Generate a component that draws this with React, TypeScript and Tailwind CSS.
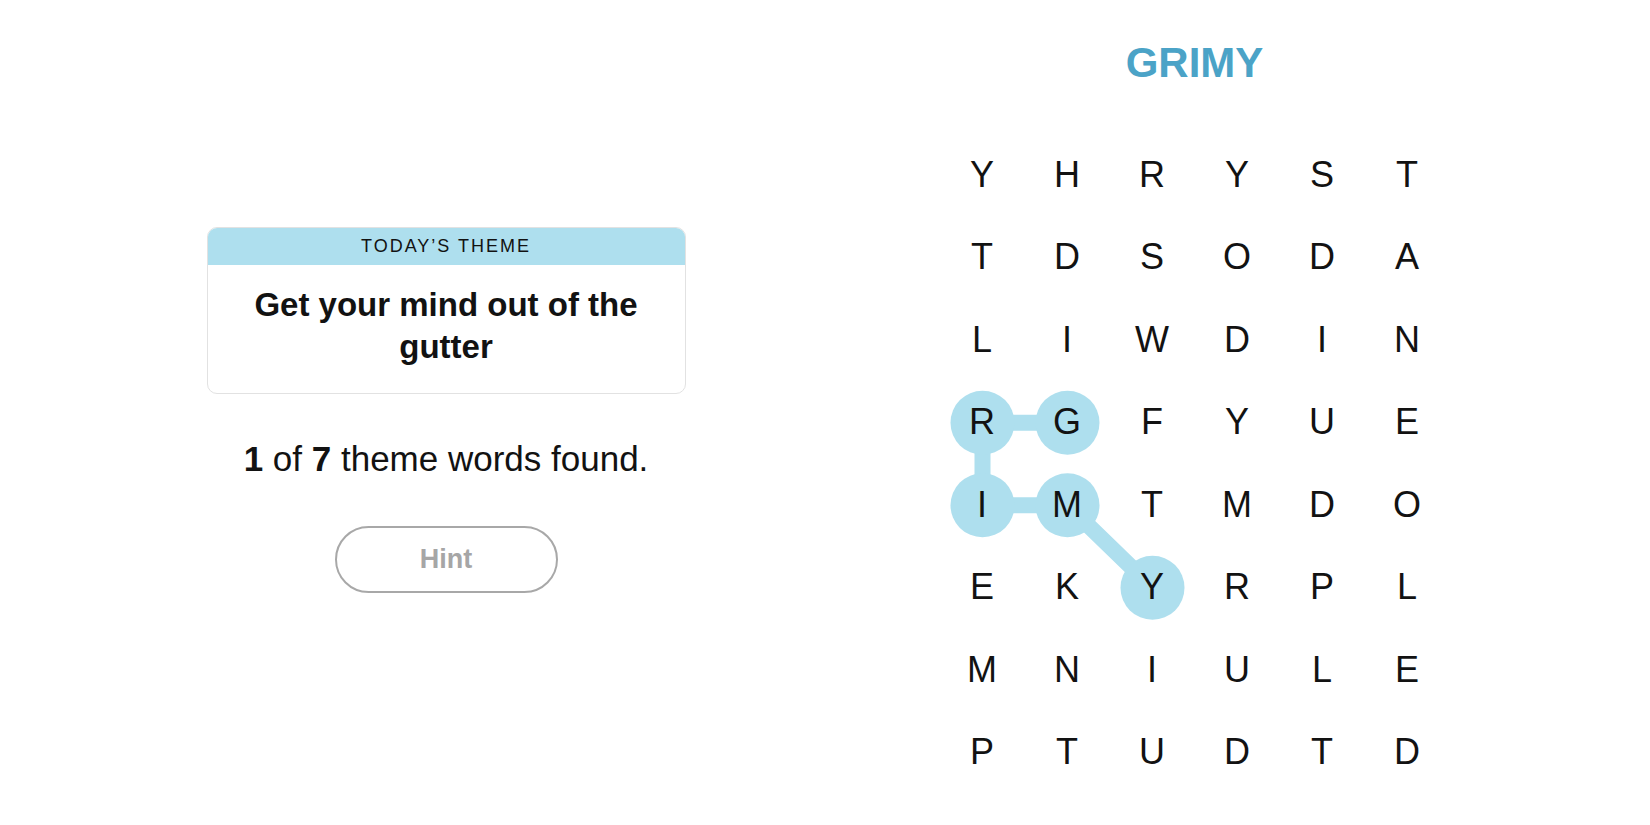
const rows = [
  "YHRYST",
  "TDSODA",
  "LIWDIN",
  "RGFYUE",
  "IMTMDO",
  "EKYRPL",
  "MNIULE",
  "PTUDTD",
];

// found word path, [col, row]
const path: [number, number][] = [
  [1, 3],
  [0, 3],
  [0, 4],
  [1, 4],
  [2, 5],
];

const CW = 85;
const CH = 82.5;

const cx = (c: number) => CW / 2 + c * CW;
const cy = (r: number) => CH / 2 + r * CH;

function Board() {
  return (
    <div className="relative grid grid-cols-6 w-[510px]">
      <svg className="absolute inset-0 pointer-events-none" width={510} height={660}>
        <polyline
          points={path.map(([c, r]) => `${cx(c)},${cy(r)}`).join(" ")}
          fill="none"
          stroke="#aedfee"
          strokeWidth={16}
          strokeLinejoin="round"
        />
        {path.map(([c, r]) => (
          <circle key={`${c}-${r}`} cx={cx(c)} cy={cy(r)} r={32} fill="#aedfee" />
        ))}
      </svg>
      {rows.map((row, r) =>
        row.split("").map((ch, c) => (
          <div
            key={`${r}-${c}`}
            className="relative h-[82.5px] flex items-center justify-center text-[36px] text-[#121212]"
          >
            {ch}
          </div>
        ))
      )}
    </div>
  );
}

export default function App() {
  return (
    <div className="w-full h-[825px] bg-white flex items-center justify-center gap-[254px] pl-[6px] font-['Liberation_Sans',Arial,sans-serif]">
      {/* left: theme + progress */}
      <div className="w-[479px] flex flex-col items-center mt-[-6px]">
        <div className="w-full border border-[#e2e2e2] rounded-[10px] overflow-hidden">
          <div className="h-[37px] bg-[#aedfee] flex items-center justify-center text-[18px] tracking-[0.11em] text-[#121212]">
            TODAY’S THEME
          </div>
          <div className="px-[38px] pt-[19px] pb-[25px] text-center text-[33px] leading-[42px] font-bold text-[#121212]">
            Get your mind out of the gutter
          </div>
        </div>
        <p className="mt-[45px] text-[35px] leading-[40px] text-[#121212]">
          <b>1</b> of <b>7</b> theme words found.
        </p>
        <button className="mt-[47px] w-[223px] h-[67px] rounded-full border-2 border-[#a8a8a8] text-[27px] font-bold text-[#a6a6a6]">
          Hint
        </button>
      </div>

      {/* right: spangram title + board */}
      <div className="flex flex-col items-center mt-[6px]">
        <h1 className="text-[42px] leading-[50px] font-bold text-[#4ba3c7]">GRIMY</h1>
        <div className="mt-[46px]">
          <Board />
        </div>
      </div>
    </div>
  );
}
